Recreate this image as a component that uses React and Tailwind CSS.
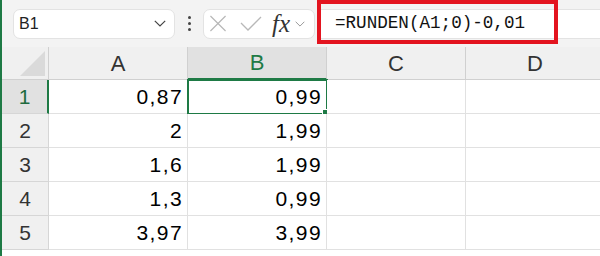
import React from 'react';

const COLS = ['A', 'B', 'C', 'D'];
const ROWS = [
  ['0,87', '0,99'],
  ['2', '1,99'],
  ['1,6', '1,99'],
  ['1,3', '0,99'],
  ['3,97', '3,99'],
];

const ChevronDown = ({ className }) => (
  <svg viewBox="0 0 12 7" className={className} fill="none" stroke="currentColor" strokeWidth="1.2">
    <path d="M0.8 0.8 L6 6 L11.2 0.8" />
  </svg>
);

const App = () => {
  return (
    <div className="relative w-[600px] h-[256px] overflow-hidden bg-white border-l-2 border-[#1e7a45] font-['Liberation_Sans',Arial,sans-serif]">
      {/* formula bar */}
      <div className="flex items-center h-[47px] bg-[#f3f3f3]">
        <div className="ml-[11px] flex items-center justify-between w-[162px] h-[30px] rounded-[7px] bg-white border border-[#e3e3e3] pl-[5px] pr-[8px]">
          <span className="text-[16px] text-[#222]">B1</span>
          <ChevronDown className="w-[12px] h-[7px] text-[#444]" />
        </div>
        <div className="w-[28px] flex flex-col items-center gap-[3px]">
          <span className="w-[3px] h-[3px] rounded-full bg-[#444]" />
          <span className="w-[3px] h-[3px] rounded-full bg-[#444]" />
          <span className="w-[3px] h-[3px] rounded-full bg-[#444]" />
        </div>
        <div className="flex items-center w-[112px] h-[30px] rounded-[7px] bg-white border border-[#e3e3e3] pl-[4px]">
          <svg viewBox="0 0 20 18" className="w-[20px] h-[17px] text-[#b8b8b8]" fill="none" stroke="currentColor" strokeWidth="1.3">
            <path d="M2 1 L18 17 M18 1 L2 17" />
          </svg>
          <svg viewBox="0 0 22 15" className="ml-[12px] w-[22px] h-[15px] text-[#b8b8b8]" fill="none" stroke="currentColor" strokeWidth="1.3">
            <path d="M1 7 L8 14 L21 1" />
          </svg>
          <span className="ml-[10px] text-[25px] leading-none italic text-[#333] font-['Liberation_Serif',serif] tracking-[0px]">fx</span>
          <ChevronDown className="ml-[5px] w-[10px] h-[6px] text-[#999]" />
        </div>
        <div className="ml-[6px] flex-1 h-[30px] bg-white border-y border-[#e3e3e3] flex items-center pl-[14px]">
          <span className="text-[17.6px] text-[#111] font-['Liberation_Mono','DejaVu_Sans_Mono',monospace]">
            =RUNDEN(A1;0)-0,01
          </span>
        </div>
      </div>

      {/* red annotation box */}
      <div className="absolute left-[315px] top-0 w-[241px] h-[44px] border-[4px] border-[#e3141f]" />

      {/* grid */}
      <div className="grid grid-cols-[47px_139px_139px_139px_139px] bg-[#f0f0f0]">
        <div className="h-[33px] border-r border-b border-[#d0d0d0] flex items-end justify-end pr-[3px] pb-[3px]">
          <svg viewBox="0 0 24 24" className="w-[25px] h-[25px]">
            <path d="M24 0 L24 24 L0 24 Z" fill="#dadada" />
          </svg>
        </div>
        {COLS.map((c) => (
          <div
            key={c}
            className={
              c === 'B'
                ? 'h-[33px] flex items-center justify-center bg-[#e1e1e1] border-r border-[#d0d0d0] border-b-2 border-b-[#1e7a45] text-[22px] text-[#1e7a45]'
                : 'h-[33px] flex items-center justify-center border-r border-b border-[#d0d0d0] text-[22px] text-[#333]'
            }
          >
            {c}
          </div>
        ))}
        {ROWS.map((r, i) => (
          <React.Fragment key={i}>
            <div
              className={
                i === 0
                  ? 'h-[34px] flex items-center justify-center bg-[#e1e1e1] border-r-2 border-r-[#1e7a45] border-b border-[#d6d6d6] text-[21px] text-[#1e6b3e]'
                  : 'h-[34px] flex items-center justify-center border-r border-b border-[#d6d6d6] text-[21px] text-[#333]'
              }
            >
              {i + 1}
            </div>
            {[r[0], r[1], '', ''].map((v, j) => (
              <div
                key={j}
                className="relative h-[34px] bg-white border-r border-b border-[#e1e1e1] flex items-center justify-end pr-[4px] text-[21px] text-black tracking-[1.4px]"
              >
                {v}
                {i === 0 && j === 1 ? (
                  <>
                    <div className="absolute -left-px -top-px w-[141px] h-[36px] border-2 border-[#1e7a45]" />
                    <div className="absolute right-[-4px] bottom-[-4px] w-[6px] h-[6px] bg-[#1e7a45] border border-white box-content" />
                  </>
                ) : null}
              </div>
            ))}
          </React.Fragment>
        ))}
      </div>
    </div>
  );
};

export default App;
